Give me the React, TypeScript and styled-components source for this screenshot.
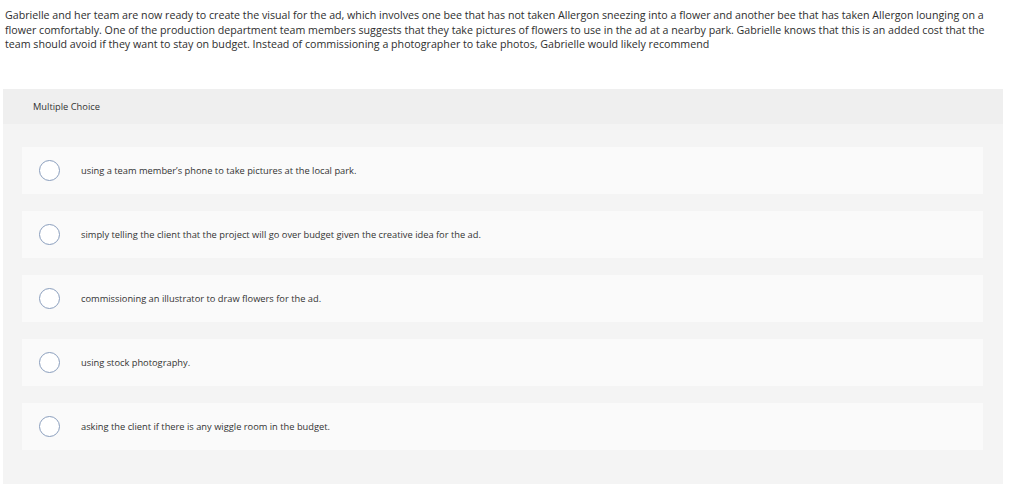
import styled, { createGlobalStyle } from 'styled-components';
import { FC } from 'react';

const GlobalStyle = createGlobalStyle`
  html, body {
    margin: 0;
    padding: 0;
    background: #ffffff;
  }
  body {
    font-family: 'Open Sans', Arial, sans-serif;
    color: #333333;
  }
`;

const Page = styled.div`
  width: 1024px;
  height: 484px;
  overflow: hidden;
  padding: 0 21px 0 3px;
  box-sizing: border-box;
`;

const Prompt = styled.p`
  margin: 0;
  padding: 8px 2px 0 2px;
  font-size: 10.66px;
  line-height: 14.6px;
  color: #2e2e2e;
`;

const Panel = styled.section`
  margin-top: 37px;
  width: 1000px;
  background: #f4f4f4;
  padding-bottom: 60px;
`;

const PanelHeader = styled.div`
  height: 35px;
  display: flex;
  align-items: center;
  padding-left: 30px;
  background: #efefef;
  font-size: 9.3px;
  color: #333333;
`;

const Choices = styled.div`
  display: flex;
  flex-direction: column;
  gap: 17px;
  padding: 23px 20px 0 19px;
`;

const Choice = styled.label`
  height: 47px;
  display: flex;
  align-items: center;
  background: #fafafa;
  cursor: pointer;
`;

const Radio = styled.span`
  width: 19px;
  height: 19px;
  margin-left: 17px;
  border: 1px solid #8a9ebd;
  border-radius: 50%;
  background: #ffffff;
  flex-shrink: 0;
`;

const ChoiceText = styled.span`
  margin-left: 21px;
  font-size: 9.3px;
  color: #333333;
`;

const choices = [
  'using a team member’s phone to take pictures at the local park.',
  'simply telling the client that the project will go over budget given the creative idea for the ad.',
  'commissioning an illustrator to draw flowers for the ad.',
  'using stock photography.',
  'asking the client if there is any wiggle room in the budget.'
];

const App: FC = () => {
  return (
    <Page>
      <GlobalStyle />
      <Prompt>
        Gabrielle and her team are now ready to create the visual for the ad, which involves one bee that has not
        taken Allergon sneezing into a flower and another bee that has taken Allergon lounging on a flower
        comfortably. One of the production department team members suggests that they take pictures of flowers
        to use in the ad at a nearby park. Gabrielle knows that this is an added cost that the team should avoid
        if they want to stay on budget. Instead of commissioning a photographer to take photos, Gabrielle would
        likely recommend
      </Prompt>
      <Panel>
        <PanelHeader>Multiple Choice</PanelHeader>
        <Choices>
          {choices.map((text) => (
            <Choice key={text}>
              <Radio />
              <ChoiceText>{text}</ChoiceText>
            </Choice>
          ))}
        </Choices>
      </Panel>
    </Page>
  );
};

export default App;
